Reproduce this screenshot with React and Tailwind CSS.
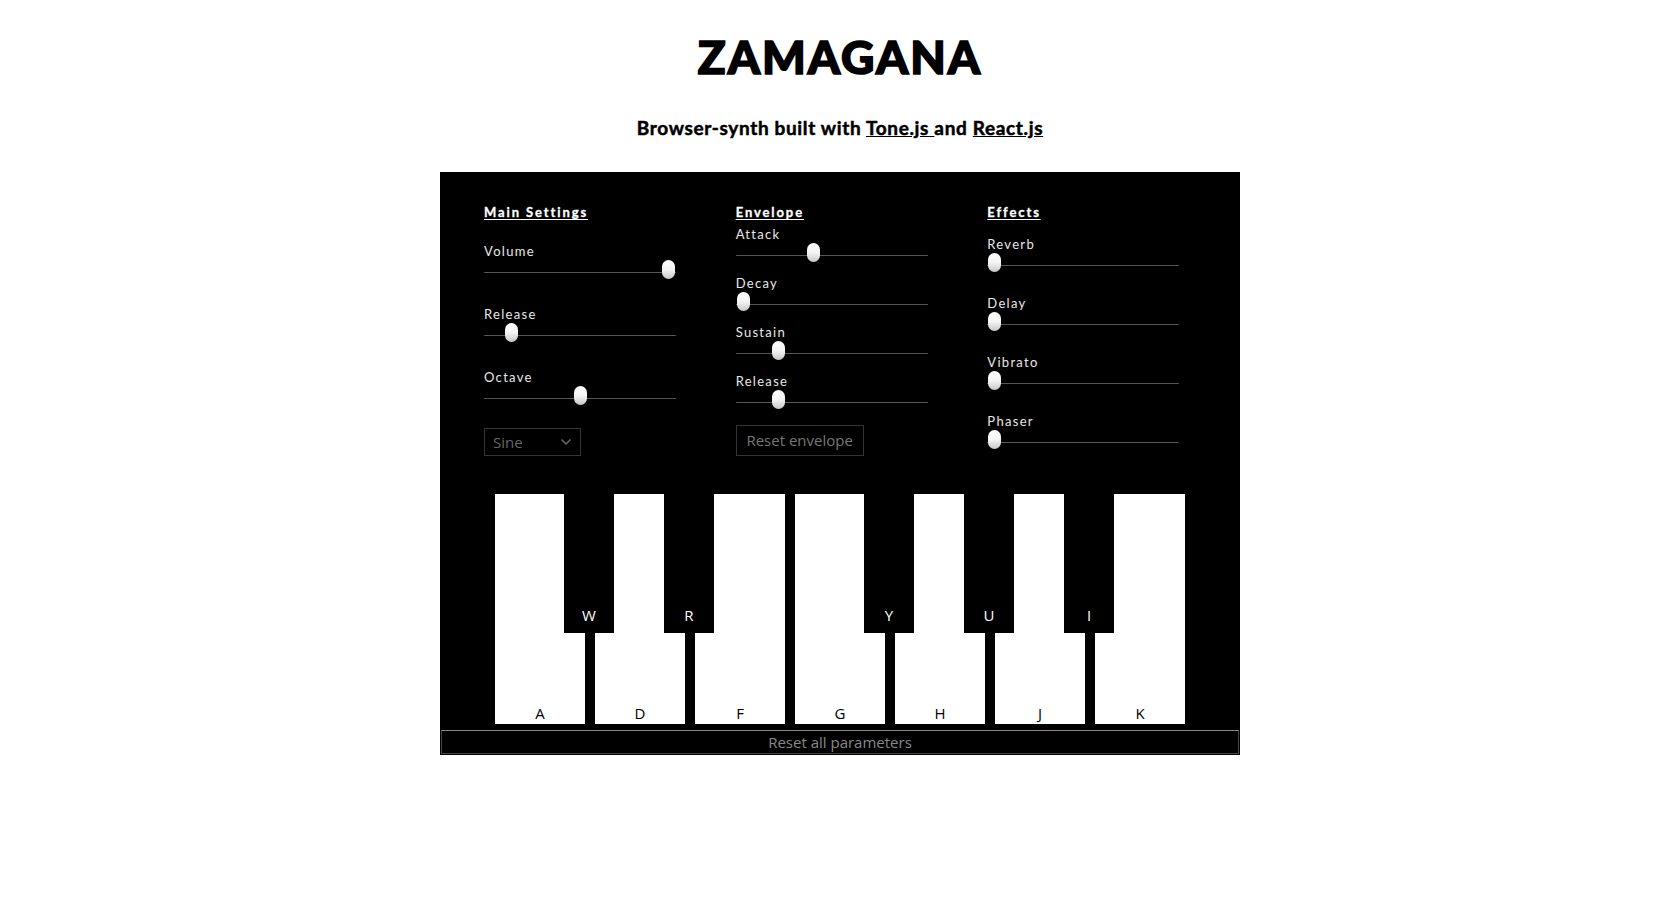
import React from 'react';
import { ChevronDown } from 'lucide-react';

const TRACK = 192;
const THUMB = 13;

const Slider = ({ label, value }) => (
  <div className="flex flex-col">
    <span className="text-[13px] leading-4 tracking-[1.3px] text-[#e8e8e8]">{label}</span>
    <div className="relative mt-px h-[22px]" style={{ width: TRACK }}>
      <div className="absolute left-0 right-0 top-[12px] h-px rounded-full bg-[#555]" />
      <div
        className="absolute top-0 h-[19px] w-[13px] rounded-full bg-gradient-to-b from-white via-[#f4f4f4] to-[#c8c8c8]"
        style={{ left: Math.round(value * (TRACK - THUMB)) }}
      />
    </div>
  </div>
);

const Heading = ({ children }) => (
  <h3 className="text-[13px] font-bold leading-4 tracking-[1.9px] text-white underline underline-offset-2 [-webkit-text-stroke:0.3px_white]">
    {children}
  </h3>
);

const whites = ['A', 'D', 'F', 'G', 'H', 'J', 'K'];
const blacks = [
  { k: 'W', x: 69 },
  { k: 'R', x: 169 },
  { k: 'Y', x: 369 },
  { k: 'U', x: 469 },
  { k: 'I', x: 569 },
];

export default function App() {
  return (
    <div className="min-h-screen bg-white font-['Lato',sans-serif] text-black">
      <h1 className="mt-[34px] text-center text-[46px] font-black leading-none tracking-[2px] [-webkit-text-stroke:1.6px_black]">
        ZAMAGANA
      </h1>
      <p className="mt-9 text-center text-[19px] font-bold leading-6 tracking-[0.65px] [-webkit-text-stroke:0.5px_black]">
        Browser-synth built with <a href="#" className="underline">Tone.js </a>and{' '}
        <a href="#" className="underline">React.js</a>
      </p>

      <div className="mx-auto mt-8 flex w-[800px] flex-col bg-black px-px pb-px pt-8">
        <div className="grid grid-cols-3 pl-[43px]">
          <div className="flex flex-col">
            <Heading>Main Settings</Heading>
            <div className="mt-[23px] flex flex-col gap-6">
              <Slider label="Volume" value={0.995} />
              <Slider label="Release" value={0.12} />
              <Slider label="Octave" value={0.5} />
            </div>
            <div className="mt-5 flex h-7 w-[97px] items-center justify-between border border-[#333] pl-2 pr-[6px] font-['Open_Sans',sans-serif] text-[15px] text-[#666]">
              <span>Sine</span>
              <ChevronDown className="h-4 w-4" strokeWidth={2.5} />
            </div>
          </div>

          <div className="flex flex-col">
            <Heading>Envelope</Heading>
            <div className="mt-[6px] flex flex-col gap-[10px]">
              <Slider label="Attack" value={0.395} />
              <Slider label="Decay" value={0.005} />
              <Slider label="Sustain" value={0.2} />
              <Slider label="Release" value={0.2} />
            </div>
            <button
              type="button"
              className="mt-[13px] h-[31px] w-32 border border-[#333] bg-black font-['Open_Sans',sans-serif] text-[15px] text-[#777]"
            >
              Reset envelope
            </button>
          </div>

          <div className="flex flex-col">
            <Heading>Effects</Heading>
            <div className="mt-4 flex flex-col gap-5">
              <Slider label="Reverb" value={0.005} />
              <Slider label="Delay" value={0.005} />
              <Slider label="Vibrato" value={0.005} />
              <Slider label="Phaser" value={0.005} />
            </div>
          </div>
        </div>

        <div className="relative mx-auto mt-[38px] flex gap-[10px] font-['Open_Sans',sans-serif] text-[15px]">
          {whites.map((k) => (
            <div key={k} className="flex h-[230px] w-[90px] items-end justify-center bg-white pb-[1px] leading-5 text-black">
              {k}
            </div>
          ))}
          {blacks.map(({ k, x }) => (
            <div
              key={k}
              className="absolute top-0 flex h-[139px] w-[50px] items-end justify-center bg-black pb-[8px] leading-5 text-white"
              style={{ left: x }}
            >
              {k}
            </div>
          ))}
        </div>

        <button
          type="button"
          className="mt-[6px] h-6 w-full border border-[#444] border-t-[#888] bg-black font-['Open_Sans',sans-serif] text-[15px] leading-5 text-[#888]"
        >
          Reset all parameters
        </button>
      </div>
    </div>
  );
}
